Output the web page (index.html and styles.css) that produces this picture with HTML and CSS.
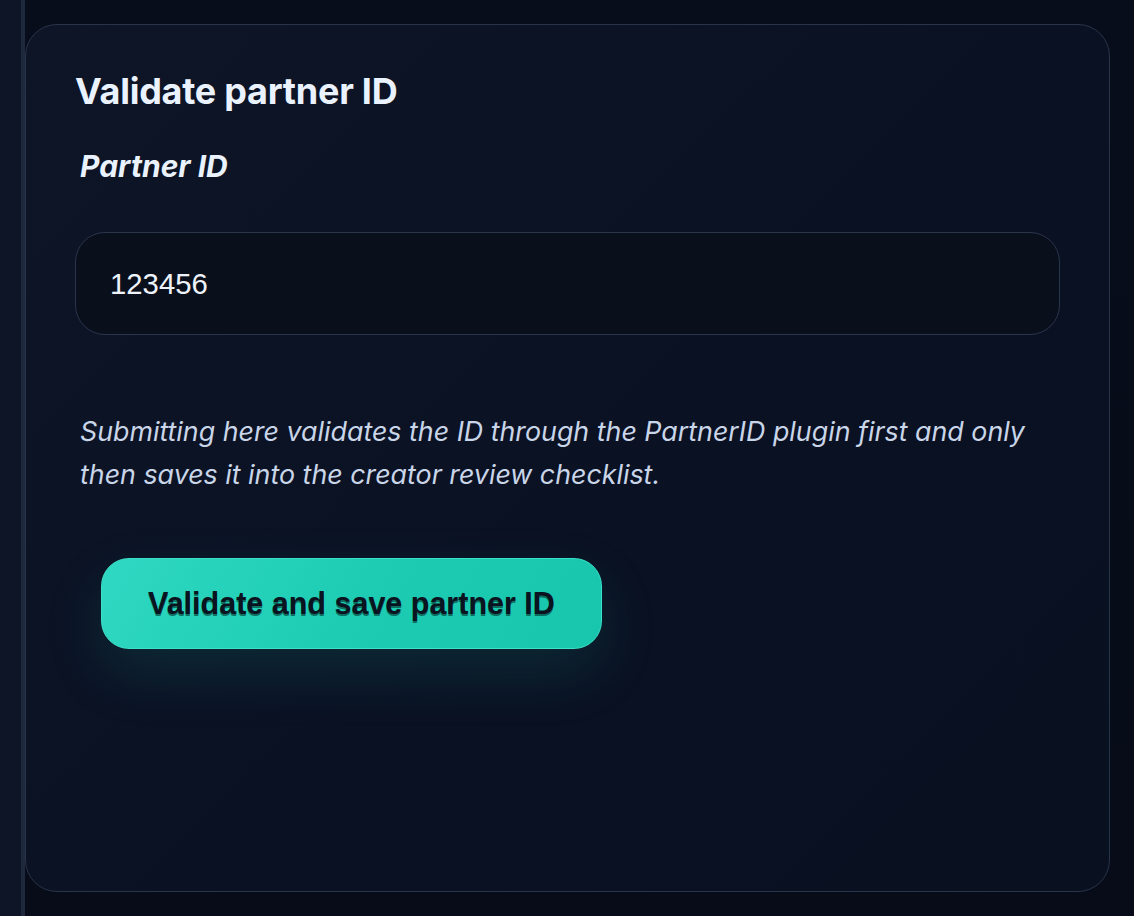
FILE: index.html
```html
<!DOCTYPE html>
<html lang="en">
<head>
<meta charset="utf-8">
<title>Validate partner ID</title>
<link rel="stylesheet" href="styles.css">
</head>
<body>
<div class="shell">
  <aside class="rail"></aside>
  <main class="main">
    <section class="card">
      <h2 class="title">Validate partner ID</h2>
      <label class="label" for="pid">Partner ID</label>
      <input class="field" id="pid" type="text" value="123456">
      <p class="note">Submitting here validates the ID through the PartnerID plugin first and only then saves it into the creator review checklist.</p>
      <div class="actions">
        <button class="btn" type="button">Validate and save partner ID</button>
      </div>
    </section>
  </main>
</div>
</body>
</html>
```
FILE: styles.css
```css
html, body {
  margin: 0;
  height: 100%;
}
body {
  background: #070c18;
  font-family: Inter, "Noto Sans", sans-serif;
  color: #e6eefb;
}
.shell {
  display: flex;
  height: 916px;
}
.rail {
  width: 21px;
  flex: none;
  background: #0d1527;
  border-right: 4px solid #1e293d;
}
.main {
  flex: 1;
  padding: 24px 24px 24px 0;
  background: linear-gradient(180deg, #080d1b 0%, #070c18 100%);
}
.card {
  box-sizing: border-box;
  height: 100%;
  border: 1px solid #283449;
  border-radius: 32px;
  background: linear-gradient(135deg, #0d1527 0%, #0a1122 60%, #091020 100%);
  padding: 46px 49px 0 49px;
}
.title {
  margin: 0;
  font-size: 36px;
  font-weight: 700;
  line-height: 40px;
  color: #eaf2fd;
  letter-spacing: -0.25px;
}
.label {
  display: block;
  margin: 37px 0 0 5px;
  font-size: 30px;
  font-style: italic;
  font-weight: 700;
  line-height: 36px;
  color: #eaf2fd;
}
.field {
  display: block;
  box-sizing: border-box;
  width: 100%;
  height: 103px;
  margin-top: 48px;
  padding: 0 34px;
  border: 1px solid #2a354b;
  border-radius: 30px;
  background: #0a0f1c;
  color: #eef3fb;
  font-family: "Liberation Sans", Arial, sans-serif;
  font-size: 29.3px;
  outline: none;
}
.note {
  margin: 75px 0 0 5px;
  font-size: 26.8px;
  font-style: italic;
  line-height: 43px;
  color: #c9d5e8;
}
.actions {
  margin-top: 62px;
  padding-left: 26px;
}
.btn {
  height: 91px;
  padding: 0 46px;
  border: 1px solid #3be0c8;
  border-radius: 28px;
  background: linear-gradient(120deg, #2fd8c2 0%, #1ccbb2 55%, #18c6ad 100%);
  color: #0a1320;
  font-family: "Liberation Sans", Arial, sans-serif;
  font-size: 30.5px;
  font-weight: 700;
  text-shadow: 0 2px 0 rgba(6, 70, 62, 0.7);
  box-shadow: 0 24px 60px rgba(30, 200, 180, 0.13);
  cursor: pointer;
}
```
